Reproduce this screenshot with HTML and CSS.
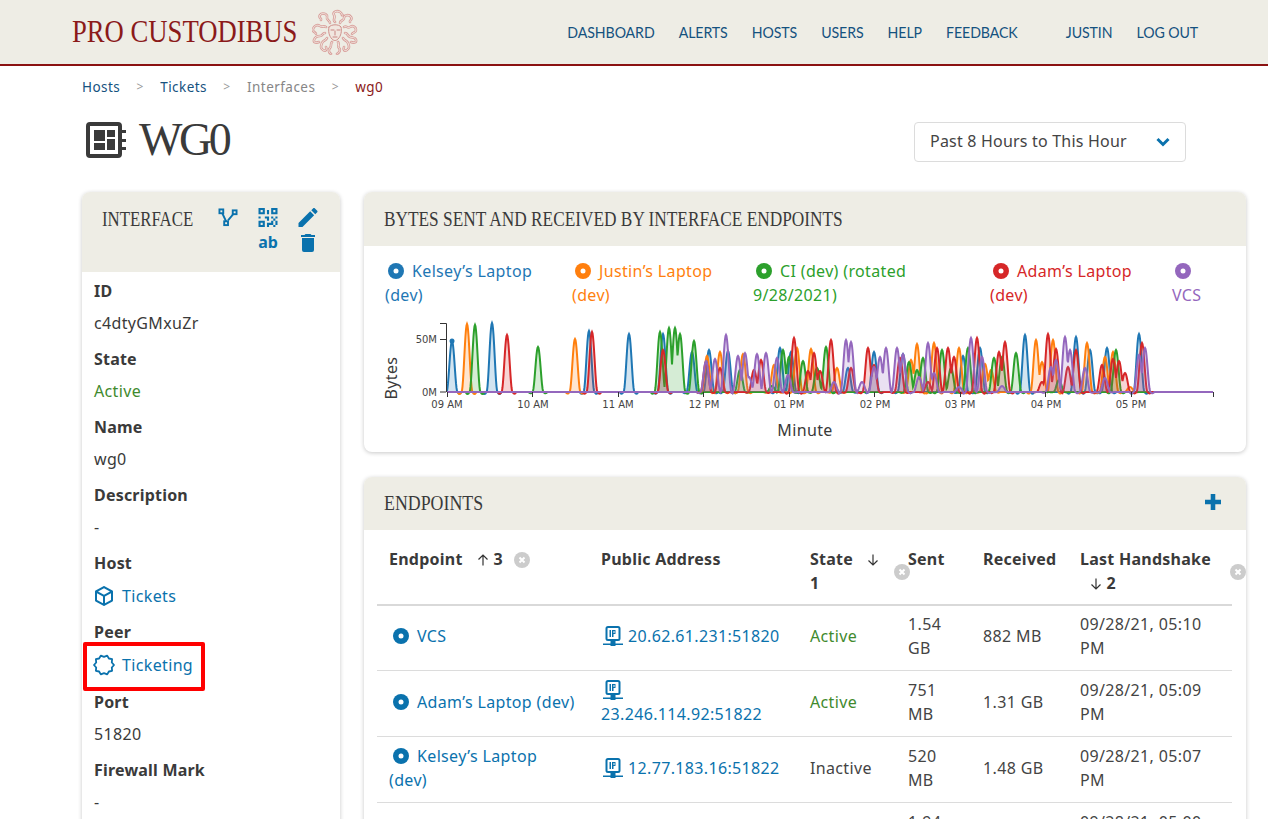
FILE: index.html
```html
<!DOCTYPE html>
<html lang="en">
<head>
<meta charset="utf-8">
<title>wg0 - Pro Custodibus</title>
<link rel="stylesheet" href="styles.css">
</head>
<body>
<header class="topbar">
  <a class="brand">PRO CUSTODIBUS</a>
  <svg class="medusa" viewBox="0 0 46 46" fill="none" stroke-linecap="round">
    <defs>
      <g id="snakes">
        <path d="M23 13c-3-2 1-4-1-7s3-5 6-3 1 4 3 3"/><path d="M28 14c0-3 4-2 4-5s5-4 7-1-2 3-1 5"/><path d="M18 14c0-3-4-3-3-6s-5-5-7-2 2 3 1 5"/>
        <path d="M32 18c3-2 3 2 6 0s6 0 6 3-3 2-4 4"/><path d="M14 18c-3-2-3 1-6-1s-6 0-7 3 3 3 3 5"/><path d="M33 24c3 0 2 3 5 4s5 0 6 3-3 3-5 2"/>
        <path d="M13 24c-3 0-2 3-5 3s-5 1-6 4 3 3 5 2"/><path d="M31 29c1 3 4 2 5 5s2 5-1 7-4-1-3-3"/><path d="M15 29c-1 3-4 2-5 5s-2 5 1 7 4-1 3-3"/>
        <path d="M26 33c2 2-1 4 1 6s0 5-2 6"/><path d="M20 33c-2 2 0 4-2 6s-1 5 1 6"/>
      </g>
    </defs>
    <use href="#snakes" stroke="#d9a09c" stroke-width="2.600"/>
    <use href="#snakes" stroke="#f1e6df" stroke-width="1"/>
    <path d="M17 18c2-3 10-3 12 0 1 4 0 9-3 12-2 2-4 2-6 0-3-3-4-8-3-12z" fill="#f1e6df" stroke="#cf8f8a"/>
    <path d="M19 21h3M25 21h3M23 22v4M21 28h4" stroke="#c98582"/>
  </svg>
  <nav class="mainnav">
    <a>Dashboard</a><a>Alerts</a><a>Hosts</a><a>Users</a><a>Help</a><a>Feedback</a>
    <a class="nav-user">Justin</a><a>Log Out</a>
  </nav>
</header>

<main class="page">
  <ol class="crumbs">
    <li><a>Hosts</a></li><li class="sep">&gt;</li>
    <li><a>Tickets</a></li><li class="sep">&gt;</li>
    <li class="muted">Interfaces</li><li class="sep">&gt;</li>
    <li class="current">wg0</li>
  </ol>

  <div class="titlebar">
    <h1 class="pagetitle">
      <svg class="chip" viewBox="0 0 40 36">
        <rect x="2" y="2" width="32" height="32" rx="2" fill="none" stroke="#3a3a3a" stroke-width="4"/>
        <path d="M36 8h4v3h-4zM36 17h4v3h-4zM36 25h4v3h-4z" fill="#3a3a3a"/>
        <path d="M8 8h11v11H8zM21 8h8v7h-8zM8 21h11v7H8zM21 17h8v11h-8z" fill="#3a3a3a"/>
      </svg>
      wg0
    </h1>
    <div class="rangeselect">
      <span class="rangetext">Past 8 Hours to This Hour</span>
      <svg class="chev" viewBox="0 0 14 10"><path d="M1.500 2 7 7.500 12.500 2" fill="none" stroke="#0a72ad" stroke-width="3"/></svg>
    </div>
  </div>

  <div class="columns">
    <aside class="card sidecard">
      <div class="cardhead sidehead">
        <h2 class="squeezed squeezed-side">Interface</h2>
        <div class="actions">
          <svg class="act" viewBox="0 0 20 20" fill="none" stroke="#0a72ad" stroke-width="2"><rect x="1" y="1.500" width="4" height="4"/><rect x="15" y="2.500" width="4" height="4"/><rect x="6" y="14" width="4" height="4"/><path d="M4 5.500l4 8.500M10 13l6-7"/></svg>
          <svg class="act" viewBox="3 3 18 18" fill="#0a72ad"><path d="M3,11H5V13H3V11M11,5H13V9H11V5M9,11H13V15H11V13H9V11M15,11H17V13H19V11H21V13H19V15H21V19H19V21H17V19H13V21H11V17H15V15H17V13H15V11M19,19V15H17V19H19M15,3H21V9H15V3M17,5V7H19V5H17M3,3H9V9H3V3M5,5V7H7V5H5M3,15H9V21H3V15M5,17V19H7V17H5Z"/></svg>
          <svg class="act" viewBox="3 3 18 18" fill="#0a72ad"><path d="M20.71,7.04C21.1,6.65 21.1,6 20.71,5.63L18.37,3.29C18,2.9 17.35,2.9 16.96,3.29L15.12,5.12L18.87,8.87M3,17.25V21H6.75L17.81,9.93L14.06,6.18L3,17.25Z"/></svg>
          <span class="act-spacer"></span>
          <span class="act-ab">ab</span>
          <svg class="act act-trash" viewBox="5 3 14 18" fill="#0a72ad"><path d="M19,4H15.5L14.5,3H9.5L8.500,4H5V6H19M6,19A2,2 0 0,0 8,21H16A2,2 0 0,0 18,19V7H6V19Z"/></svg>
        </div>
      </div>
      <dl class="fields">
        <dt>ID</dt><dd>c4dtyGMxuZr</dd>
        <dt>State</dt><dd class="ok">Active</dd>
        <dt>Name</dt><dd>wg0</dd>
        <dt>Description</dt><dd>-</dd>
        <dt>Host</dt>
        <dd class="linkrow"><svg class="rowicon" viewBox="2 2 20 20" fill="#0a72ad"><path d="M21,16.5C21,16.88 20.79,17.21 20.47,17.38L12.57,21.82C12.41,21.94 12.21,22 12,22C11.79,22 11.59,21.94 11.43,21.82L3.53,17.38C3.21,17.21 3,16.88 3,16.5V7.5C3,7.12 3.21,6.79 3.53,6.62L11.43,2.18C11.59,2.06 11.79,2 12,2C12.21,2 12.41,2.06 12.57,2.18L20.47,6.62C20.79,6.79 21,7.12 21,7.5V16.5M12,4.15L6.04,7.5L12,10.85L17.96,7.5L12,4.15M5,15.91L11,19.29V12.58L5,9.21V15.91M19,15.91V9.21L13,12.58V19.29L19,15.91Z"/></svg><a>Tickets</a></dd>
        <dt>Peer</dt>
        <dd class="linkrow peerrow">
          <svg class="rowicon seal" viewBox="1 1 22 22" fill="none" stroke="#0a72ad" stroke-width="1.800" stroke-linejoin="round"><path d="M22 12l-2.200-2.500.3-3.300-3.200-.7-1.700-2.900L12 3.900 8.800 2.600 7.100 5.500l-3.200.7.3 3.300L2 12l2.200 2.500-.3 3.300 3.200.7 1.700 2.900 3.200-1.300 3.200 1.300 1.700-2.900 3.200-.7-.3-3.300z"/></svg><a>Ticketing</a>
          <span class="highlight"></span>
        </dd>
        <dt>Port</dt><dd>51820</dd>
        <dt>Firewall Mark</dt><dd>-</dd>
      </dl>
    </aside>

    <div class="maincol">
      <section class="card chartcard">
        <div class="cardhead"><h2 class="squeezed squeezed-chart">Bytes Sent and Received by Interface Endpoints</h2></div>
        <ul class="legend">
          <li class="s-blue"><svg class="dot" viewBox="0 0 16 16"><circle cx="8" cy="8" r="8" fill="currentColor"/><circle cx="8" cy="8" r="2.500" fill="#fff"/></svg>Kelsey’s Laptop (dev)</li>
          <li class="s-orange"><svg class="dot" viewBox="0 0 16 16"><circle cx="8" cy="8" r="8" fill="currentColor"/><circle cx="8" cy="8" r="2.500" fill="#fff"/></svg>Justin’s Laptop (dev)</li>
          <li class="s-green"><svg class="dot" viewBox="0 0 16 16"><circle cx="8" cy="8" r="8" fill="currentColor"/><circle cx="8" cy="8" r="2.500" fill="#fff"/></svg>CI (dev) (rotated 9/28/2021)</li>
          <li class="s-red"><svg class="dot" viewBox="0 0 16 16"><circle cx="8" cy="8" r="8" fill="currentColor"/><circle cx="8" cy="8" r="2.500" fill="#fff"/></svg>Adam’s Laptop (dev)</li>
          <li class="s-purple"><svg class="dot" viewBox="0 0 16 16"><circle cx="8" cy="8" r="8" fill="currentColor"/><circle cx="8" cy="8" r="2.500" fill="#fff"/></svg><br>VCS</li>
        </ul>
        <svg class="chart" id="chart" viewBox="377 318 856 126">
          <g id="series"></g>
          <g class="axis">
            <path d="M440 323.500h6.500V392M440 339.500h6"/>
            <path d="M447.500 392v5M532.500 392v5M618.500 392v5M703.500 392v5M789.500 392v5M874.500 392v5M960.500 392v5M1045.500 392v5M1131.500 392v5M1213.500 392v5M440 392h6"/>
          </g>
          <g class="ticks">
            <text x="437" y="343" text-anchor="end">50M</text>
            <text x="437" y="396" text-anchor="end">0M</text>
            <text x="447" y="408" text-anchor="middle">09 AM</text>
            <text x="533" y="408" text-anchor="middle">10 AM</text>
            <text x="618" y="408" text-anchor="middle">11 AM</text>
            <text x="704" y="408" text-anchor="middle">12 PM</text>
            <text x="789" y="408" text-anchor="middle">01 PM</text>
            <text x="875" y="408" text-anchor="middle">02 PM</text>
            <text x="960" y="408" text-anchor="middle">03 PM</text>
            <text x="1046" y="408" text-anchor="middle">04 PM</text>
            <text x="1131" y="408" text-anchor="middle">05 PM</text>
          </g>
          <text class="axislabel" x="805" y="436" text-anchor="middle">Minute</text>
          <text class="axislabel" transform="translate(397 378) rotate(-90)" text-anchor="middle">Bytes</text>
        </svg>
      </section>

      <section class="card endpoints">
        <div class="cardhead endhead">
          <h2 class="squeezed">Endpoints</h2>
          <svg class="plus" viewBox="5 5 14 14" fill="#0a72ad"><path d="M19 14h-5v5h-4v-5H5v-4h5V5h4v5h5z"/></svg>
        </div>
        <table class="endtable">
          <colgroup><col class="c1"><col class="c2"><col class="c3"><col class="c4"><col class="c5"><col class="c6"></colgroup>
          <thead>
            <tr>
              <th>Endpoint <svg class="arrow" viewBox="0 0 12 12"><path d="M6 11.500V1M1.500 5.500 6 1l4.500 4.500" fill="none" stroke="#333" stroke-width="1.200"/></svg> 3 <svg class="clear" viewBox="0 0 16 16"><circle cx="8" cy="8" r="8" fill="#ccc"/><path d="M5.500 5.500l5 5M10.500 5.500l-5 5" stroke="#fff" stroke-width="2"/></svg></th>
              <th>Public Address</th>
              <th class="hasclear">State <svg class="arrow arrow-gap" viewBox="0 0 12 12"><path d="M6 .5V11M1.500 6.500 6 11l4.500-4.500" fill="none" stroke="#333" stroke-width="1.200"/></svg> 1 <svg class="clear clear-abs" viewBox="0 0 16 16"><circle cx="8" cy="8" r="8" fill="#ccc"/><path d="M5.500 5.500l5 5M10.500 5.500l-5 5" stroke="#fff" stroke-width="2"/></svg></th>
              <th>Sent</th>
              <th>Received</th>
              <th class="hasclear">Last Handshake <span class="sortline"><svg class="arrow" viewBox="0 0 12 12"><path d="M6 .5V11M1.500 6.500 6 11l4.500-4.500" fill="none" stroke="#333" stroke-width="1.200"/></svg> 2</span><svg class="clear clear-abs" viewBox="0 0 16 16"><circle cx="8" cy="8" r="8" fill="#ccc"/><path d="M5.500 5.500l5 5M10.500 5.500l-5 5" stroke="#fff" stroke-width="2"/></svg></th>
            </tr>
          </thead>
          <tbody>
            <tr>
              <td><a><svg class="rec" viewBox="0 0 16 16"><circle cx="8" cy="8" r="8" fill="#0a72ad"/><circle cx="8" cy="8" r="2.500" fill="#fff"/></svg>VCS</a></td>
              <td><a><svg class="ip" viewBox="0 0 20 20"><rect x="3.500" y="1" width="13" height="13" rx="1.500" fill="none" stroke="#0a72ad" stroke-width="2"/><path d="M6.500 4h1.500v7H6.500zM9 4h1.500v7H9zM10.500 4h2v4h-2v-1h1V5h-1z" fill="#0a72ad"/><path d="M0 17.500h20V19H0zM7.500 15h5v5h-5z" fill="#0a72ad"/></svg>20.62.61.231:51820</a></td>
              <td class="ok">Active</td><td>1.54 GB</td><td>882 MB</td><td>09/28/21, 05:10 PM</td>
            </tr>
            <tr>
              <td><a><svg class="rec" viewBox="0 0 16 16"><circle cx="8" cy="8" r="8" fill="#0a72ad"/><circle cx="8" cy="8" r="2.500" fill="#fff"/></svg>Adam’s Laptop (dev)</a></td>
              <td><a><svg class="ip" viewBox="0 0 20 20"><rect x="3.500" y="1" width="13" height="13" rx="1.500" fill="none" stroke="#0a72ad" stroke-width="2"/><path d="M6.500 4h1.500v7H6.500zM9 4h1.500v7H9zM10.500 4h2v4h-2v-1h1V5h-1z" fill="#0a72ad"/><path d="M0 17.500h20V19H0zM7.500 15h5v5h-5z" fill="#0a72ad"/></svg><br>23.246.114.92:51822</a></td>
              <td class="ok">Active</td><td>751 MB</td><td>1.31 GB</td><td>09/28/21, 05:09 PM</td>
            </tr>
            <tr>
              <td><a><svg class="rec" viewBox="0 0 16 16"><circle cx="8" cy="8" r="8" fill="#0a72ad"/><circle cx="8" cy="8" r="2.500" fill="#fff"/></svg>Kelsey’s Laptop<br>(dev)</a></td>
              <td><a><svg class="ip" viewBox="0 0 20 20"><rect x="3.500" y="1" width="13" height="13" rx="1.500" fill="none" stroke="#0a72ad" stroke-width="2"/><path d="M6.500 4h1.500v7H6.500zM9 4h1.500v7H9zM10.500 4h2v4h-2v-1h1V5h-1z" fill="#0a72ad"/><path d="M0 17.500h20V19H0zM7.500 15h5v5h-5z" fill="#0a72ad"/></svg>12.77.183.16:51822</a></td>
              <td>Inactive</td><td>520 MB</td><td>1.48 GB</td><td>09/28/21, 05:07 PM</td>
            </tr>
            <tr>
              <td><a><svg class="rec" viewBox="0 0 16 16"><circle cx="8" cy="8" r="8" fill="#0a72ad"/><circle cx="8" cy="8" r="2.500" fill="#fff"/></svg>Justin’s Laptop</a></td>
              <td></td>
              <td>Inactive</td><td>1.94 GB</td><td>1.02 GB</td><td>09/28/21, 05:00 PM</td>
            </tr>
          </tbody>
        </table>
      </section>
    </div>
  </div>
</main>
<script src="chart.js"></script>
</body>
</html>
```

FILE: styles.css
```css
* { box-sizing: border-box; }
html, body { height: 100%; margin: 0; overflow: hidden; }
body {
  background: #fff;
  color: #3a3a3a;
  font-family: "Noto Sans", "Open Sans", sans-serif;
  font-size: 16px;
  line-height: 24px;
  letter-spacing: .35px;
}
a { color: #0a72ad; text-decoration: none; }

.topbar {
  height: 66px;
  display: flex;
  align-items: center;
  background: #eeede5;
  border-bottom: 2px solid #8b1212;
  padding: 0 70px 0 72px;
}
.brand {
  width: 226px;
  flex: none;
  font-family: "Liberation Serif", serif;
  font-size: 31px;
  letter-spacing: 0;
  color: #8b1a1a;
  white-space: nowrap;
  transform: scaleX(.86);
  transform-origin: left center;
}
.medusa { width: 46px; height: 46px; margin-left: 14px; flex: none; }
.mainnav {
  margin-left: auto;
  display: flex;
  gap: 26.300px;
  transform: scaleX(.914);
  transform-origin: right center;
}
.mainnav a {
  font-family: "Lato", sans-serif;
  font-size: 15.500px;
  letter-spacing: -.1px;
  text-transform: uppercase;
  color: #15527f;
}
.mainnav .nav-user { margin-left: 26.300px; }

.page { padding: 9px 22px 0 82px; }
.crumbs {
  list-style: none;
  margin: 0;
  padding: 0;
  display: flex;
  font-size: 13.500px;
  letter-spacing: .45px;
  line-height: 24px;
  height: 24px;
}
.crumbs a { color: #15527f; }
.crumbs .sep { color: #999; width: 16px; text-align: center; margin: 0 12px; font-size: 12px; }
.crumbs .muted { color: #868686; }
.crumbs .current { color: #8b1a1a; }

.titlebar {
  display: flex;
  justify-content: space-between;
  align-items: flex-start;
  margin-top: 23px;
  height: 70px;
  padding-right: 60px;
}
.pagetitle {
  display: flex;
  align-items: center;
  gap: 13px;
  margin: 0 0 0 4px;
  font-family: "Liberation Serif", serif;
  font-weight: 400;
  font-size: 46px;
  line-height: 36px;
  letter-spacing: -3.500px;
  text-transform: uppercase;
  color: #3a3a3a;
}
.chip { width: 40px; height: 36px; flex: none; }
.rangeselect {
  width: 272px;
  height: 40px;
  padding: 0 15px 2px;
  border: 1px solid #dcdcdc;
  border-radius: 4px;
  display: flex;
  align-items: center;
  justify-content: space-between;
  color: #444;
}
.rangetext { letter-spacing: .2px; }
.chev { width: 14px; height: 10px; margin-top: 2px; }

.columns {
  display: grid;
  grid-template-columns: 258px 882px;
  column-gap: 24px;
  align-items: start;
}
.card {
  background: #fff;
  border-radius: 8px;
  box-shadow: 0 1px 4px rgba(0, 0, 0, .22);
  overflow: hidden;
}
.cardhead {
  background: #eeede5;
  height: 54px;
  padding: 15px 20px;
}
.cardhead h2 {
  margin: 0;
  font-family: "Liberation Serif", serif;
  font-weight: 400;
  font-size: 21px;
  line-height: 24px;
  letter-spacing: 0;
  text-transform: uppercase;
  color: #3a3a3a;
  white-space: nowrap;
}
.squeezed { transform: scaleX(.85); transform-origin: left center; }
.squeezed-side { transform: scaleX(.8); }
.squeezed-chart { transform: scaleX(.823); }

.sidecard { overflow: visible; }
.sidehead {
  height: 80px;
  display: flex;
  justify-content: space-between;
  border-radius: 8px 8px 0 0;
  padding: 15px 20px;
}
.sidehead .squeezed { width: 96px; }
.actions {
  display: grid;
  grid-template-columns: repeat(3, 20px);
  column-gap: 20px;
  row-gap: 6px;
  grid-auto-rows: 19px;
  justify-items: center;
  align-items: center;
  margin-top: 1px;
  margin-right: 2px;
}
.act { width: 20px; height: 19px; display: block; }
.act-trash { width: 14px; height: 18px; }
.act-ab { font-weight: 700; font-size: 16px; line-height: 19px; letter-spacing: 0; color: #0a72ad; }

.fields { margin: 0; padding: 7px 12px 40px; }
.fields dt { font-weight: 700; letter-spacing: .2px; height: 24px; margin-bottom: 8px; }
.fields dd { margin: 0 0 12px; height: 24px; }
.fields .linkrow {
  position: relative;
  display: flex;
  align-items: center;
  gap: 8px;
  height: 25px;
  margin-bottom: 12px;
}
.fields .peerrow { margin-bottom: 13px; }
.rowicon { width: 20px; height: 20px; flex: none; }
.seal { width: 22px; height: 22px; margin: 0 -1px; }
.ok { color: #3f8a2e; }
.highlight {
  position: absolute;
  left: -11px;
  top: -10px;
  width: 122px;
  height: 49px;
  border: 4px solid #f00;
  border-radius: 2px;
}

.maincol { display: flex; flex-direction: column; gap: 25px; }
.chartcard { height: 260px; }
.legend {
  list-style: none;
  margin: 0;
  padding: 13px 0 0 21px;
  display: grid;
  grid-template-columns: 187px 181px 237px 182px 60px;
  height: 72px;
}
.legend li { width: 170px; }
.legend .s-green { width: 190px; }
.legend .s-purple { width: 60px; }
.dot { width: 16px; height: 16px; margin: 0 8px 0 3px; vertical-align: -2px; }
.s-blue { color: #1f77b4; }
.s-orange { color: #ff7f0e; }
.s-green { color: #2ca02c; }
.s-red { color: #d62728; }
.s-purple { color: #9467bd; }
.chart { display: block; width: 856px; height: 126px; margin-left: 13px; }
.axis path { fill: none; stroke: #333; stroke-width: 1; }
.ticks text { font-family: "DejaVu Sans", sans-serif; font-size: 10px; letter-spacing: 0; fill: #444; }
.axislabel { font-size: 16px; fill: #3a3a3a; }

.endpoints { height: 500px; overflow: hidden; }
.endhead { display: flex; justify-content: space-between; align-items: center; height: 53px; padding: 0 25px 2px 20px; }
.plus { width: 16px; height: 16px; margin-top: -2px; }
.endtable {
  table-layout: fixed;
  width: 855px;
  margin-left: 13px;
  border-collapse: collapse;
}
.c1 { width: 212px; } .c2 { width: 209px; } .c3 { width: 98px; }
.c4 { width: 75px; } .c5 { width: 97px; } .c6 { width: 164px; }
.endtable th {
  text-align: left;
  vertical-align: top;
  padding: 17px 12px 9px;
  font-weight: 700;
  letter-spacing: .25px;
  color: #3a3a3a;
  border-bottom: 2px solid #d9d9d9;
}
.hasclear { position: relative; }
.endtable td {
  padding: 7px 12px 10px;
  border-bottom: 1px solid #dcdcdc;
  vertical-align: middle;
  color: #444;
}
.endtable tbody tr:first-child td { padding-top: 6px; }
.endtable td.ok { color: #3f8a2e; }
.endtable td a { color: #0a72ad; }
.arrow { width: 12px; height: 12px; margin-left: 10px; vertical-align: -1px; }
.arrow-gap { margin-left: 9px; }
.sortline { display: block; margin-left: 0; }
.clear { width: 16px; height: 16px; margin-left: 7px; vertical-align: -3px; }
.clear-abs { position: absolute; right: -14px; top: 34px; margin: 0; }
.rec { width: 16px; height: 16px; margin: 0 8px 0 4px; vertical-align: -2px; }
.ip { width: 20px; height: 20px; margin: 0 5px 0 2px; vertical-align: -4px; }
```

FILE: chart.js
```js
// Peak data: [x pixel, height above the baseline in pixels] for each endpoint.
var DATA = [
  { c: '#1f77b4', p: [[452,51],[492,69],[589,61],[629,58],[663,58],[692,40],[709,42],[728,41],[780,44],[791,40],[848,24],[874,40],[903,38],[963,36],[980,44],[1025,57],[1076,55],[1090,42],[1107,44],[1139,58]] },
  { c: '#ff7f0e', p: [[467,68],[575,53],[707,36],[720,40],[743,38],[774,27],[797,44],[811,43],[837,24],[911,32],[917,48],[934,49],[959,44],[985,28],[991,22],[1036,52],[1042,30],[1053,52],[1087,49],[1105,35],[1113,40],[1130,5]] },
  { c: '#2ca02c', p: [[475,67],[538,45],[660,60],[669,64],[675,64],[680,58],[694,51],[740,22],[772,6],[783,42],[789,35],[803,31],[817,24],[826,45],[909,30],[917,22],[923,34],[942,42],[951,24],[968,44],[994,34],[1002,35],[1016,39],[1059,12],[1116,42]] },
  { c: '#d62728', p: [[507,57],[592,60],[663,42],[706,30],[720,24],[754,22],[761,32],[794,54],[808,21],[814,39],[820,21],[831,52],[851,24],[868,44],[874,27],[900,34],[928,10],[937,44],[948,44],[954,35],[977,54],[999,40],[1005,50],[1042,10],[1048,58],[1056,43],[1068,25],[1076,42],[1102,27],[1113,33],[1119,31],[1125,19],[1142,49]] },
  { c: '#9467bd', p: [[706,31],[715,33],[726,57],[738,36],[745,39],[749,15],[757,38],[766,39],[777,34],[788,17],[834,10],[846,52],[851,50],[862,10],[874,25],[880,35],[886,44],[897,44],[903,38],[919,15],[928,49],[934,19],[959,5],[971,54],[982,35],[1002,6],[1051,25],[1056,32],[1065,55],[1070,42],[1085,24],[1105,14],[1139,37],[1145,44]] }
];
var X0 = 447, X1 = 1213, BASE = 392, HALF = 5.5;

// Each peak is a bell with a slight undershoot at its foot.
function valueAt(peaks, x) {
  var top = 0, dip = 0;
  peaks.forEach(function (p) {
    var t = Math.abs(x - p[0]) / HALF;
    if (t < 1) {
      var c = Math.cos(Math.PI * t / 2);
      top = Math.max(top, p[1] * c * c);
    } else if (t < 1.7) {
      dip = Math.min(dip, -0.03 * p[1] * Math.sin(Math.PI * (t - 1) / 0.7));
    }
  });
  return top > 0.4 ? top : dip;
}

var NS = 'http://www.w3.org/2000/svg';
var group = document.getElementById('series');
function add(tag, attrs) {
  var el = document.createElementNS(NS, tag);
  for (var k in attrs) el.setAttribute(k, attrs[k]);
  group.appendChild(el);
}
DATA.forEach(function (s) {
  var d = '';
  for (var x = X0; x <= X1; x += 0.5) {
    d += (d ? 'L' : 'M') + x + ' ' + (BASE - valueAt(s.p, x)).toFixed(2);
  }
  add('path', { d: d + 'L' + X1 + ' ' + BASE + 'L' + X0 + ' ' + BASE + 'Z', fill: s.c, 'fill-opacity': .2, stroke: 'none' });
  add('path', { d: d, fill: 'none', stroke: s.c, 'stroke-width': 2 });
});
add('circle', { cx: 452, cy: 341, r: 2.5, fill: '#1f77b4' });
```
